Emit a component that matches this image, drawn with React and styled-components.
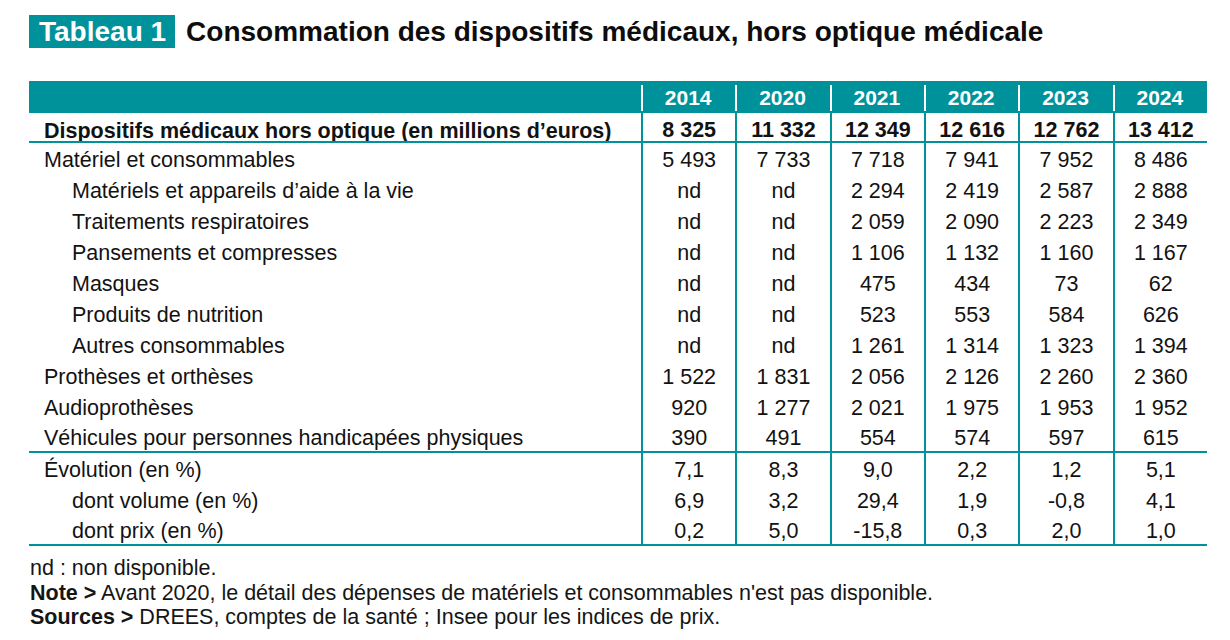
import React from "react";
import styled, { createGlobalStyle } from "styled-components";

const TEAL = "#00929a";

const Global = createGlobalStyle`
  html, body { margin: 0; padding: 0; background: #fff; }
  body { font-family: "Liberation Sans", Arial, sans-serif; color: #111; }
`;

const Page = styled.div`
  width: 1230px;
  height: 640px;
  padding: 15px 0 0 29px;
  box-sizing: border-box;
  overflow: hidden;
`;

const TitleBar = styled.div`
  display: flex;
  align-items: center;
  gap: 11px;
  height: 33px;
`;

const Badge = styled.span`
  display: inline-block;
  background: ${TEAL};
  color: #fff;
  font-weight: 700;
  font-size: 28px;
  line-height: 33px;
  height: 33px;
  padding: 0 9px 0 10px;
`;

const Title = styled.h1`
  margin: 0;
  font-size: 28px;
  font-weight: 700;
  line-height: 33px;
  color: #0d0d0d;
`;

const Table = styled.div`
  width: 1178px;
  margin-top: 33px;
  display: flex;
  flex-direction: column;
`;

const Row = styled.div`
  display: grid;
  grid-template-columns: 612px repeat(6, 1fr);
  box-sizing: border-box;
  height: ${(p) => p.$h || 31}px;
  border-bottom: ${(p) => (p.$rule ? `2px solid ${TEAL}` : "0")};
  overflow: hidden;
`;

const HeadRow = styled(Row)`
  background: ${TEAL};
`;

const HeadCell = styled.div`
  color: #fff;
  font-weight: 700;
  font-size: 21px;
  display: flex;
  align-items: center;
  justify-content: center;
  padding-top: 1px;
  background: ${(p) =>
    p.$sep
      ? `linear-gradient(#fff, #fff) 0 4px / 2px calc(100% - 6px) no-repeat`
      : "none"};
`;

const Label = styled.div`
  display: flex;
  align-items: ${(p) => (p.$bold ? "flex-end" : "center")};
  padding-left: ${(p) => (p.$indent ? 43 : 15)}px;
  padding-top: ${(p) => (p.$bold ? 0 : 3)}px;
  font-size: 21.5px;
  line-height: ${(p) => (p.$bold ? "19px" : "21px")};
  font-weight: ${(p) => (p.$bold ? 700 : 400)};
  color: #121212;
  white-space: nowrap;
`;

const Num = styled.div`
  display: flex;
  align-items: ${(p) => (p.$bold ? "flex-end" : "center")};
  justify-content: center;
  padding-top: ${(p) => (p.$bold ? 0 : 3)}px;
  border-left: 2px solid ${TEAL};
  font-size: 21.5px;
  line-height: ${(p) => (p.$bold ? "21px" : "21px")};
  font-weight: ${(p) => (p.$bold ? 700 : 400)};
  color: #121212;
  white-space: nowrap;
`;

const Notes = styled.div`
  margin-top: 10px;
  margin-left: 1px;
  font-size: 21.5px;
  line-height: 24.5px;
  color: #151515;
`;

const NoteLine = styled.div`
  white-space: nowrap;
`;

const Strong = styled.b`
  font-weight: 700;
`;

const years = ["2014", "2020", "2021", "2022", "2023", "2024"];

const rows = [
  { label: "Matériel et consommables", v: ["5 493", "7 733", "7 718", "7 941", "7 952", "8 486"] },
  { label: "Matériels et appareils d’aide à la vie", indent: true, v: ["nd", "nd", "2 294", "2 419", "2 587", "2 888"] },
  { label: "Traitements respiratoires", indent: true, v: ["nd", "nd", "2 059", "2 090", "2 223", "2 349"] },
  { label: "Pansements et compresses", indent: true, v: ["nd", "nd", "1 106", "1 132", "1 160", "1 167"] },
  { label: "Masques", indent: true, v: ["nd", "nd", "475", "434", "73", "62"] },
  { label: "Produits de nutrition", indent: true, v: ["nd", "nd", "523", "553", "584", "626"] },
  { label: "Autres consommables", indent: true, v: ["nd", "nd", "1 261", "1 314", "1 323", "1 394"] },
  { label: "Prothèses et orthèses", v: ["1 522", "1 831", "2 056", "2 126", "2 260", "2 360"] },
  { label: "Audioprothèses", v: ["920", "1 277", "2 021", "1 975", "1 953", "1 952"] },
  { label: "Véhicules pour personnes handicapées physiques", rule: true, v: ["390", "491", "554", "574", "597", "615"] },
  { label: "Évolution (en %)", v: ["7,1", "8,3", "9,0", "2,2", "1,2", "5,1"] },
  { label: "dont volume (en %)", indent: true, v: ["6,9", "3,2", "29,4", "1,9", "-0,8", "4,1"] },
  { label: "dont prix (en %)", indent: true, rule: true, v: ["0,2", "5,0", "-15,8", "0,3", "2,0", "1,0"] },
];

export default function App() {
  return (
    <Page>
      <Global />
      <TitleBar>
        <Badge>Tableau 1</Badge>
        <Title>Consommation des dispositifs médicaux, hors optique médicale</Title>
      </TitleBar>
      <Table>
        <HeadRow $h={32}>
          <HeadCell />
          {years.map((y) => (
            <HeadCell key={y} $sep>
              {y}
            </HeadCell>
          ))}
        </HeadRow>
        <Row $h={30} $rule>
          <Label $bold>Dispositifs médicaux hors optique (en millions d’euros)</Label>
          {["8 325", "11 332", "12 349", "12 616", "12 762", "13 412"].map((n, i) => (
            <Num key={i} $bold>
              {n}
            </Num>
          ))}
        </Row>
        {rows.map((r) => (
          <Row key={r.label} $rule={r.rule}>
            <Label $indent={r.indent}>{r.label}</Label>
            {r.v.map((n, i) => (
              <Num key={i}>{n}</Num>
            ))}
          </Row>
        ))}
      </Table>
      <Notes>
        <NoteLine>nd : non disponible.</NoteLine>
        <NoteLine>
          <Strong>Note &gt;</Strong> Avant 2020, le détail des dépenses de matériels et consommables n'est pas disponible.
        </NoteLine>
        <NoteLine>
          <Strong>Sources &gt;</Strong> DREES, comptes de la santé ; Insee pour les indices de prix.
        </NoteLine>
      </Notes>
    </Page>
  );
}
